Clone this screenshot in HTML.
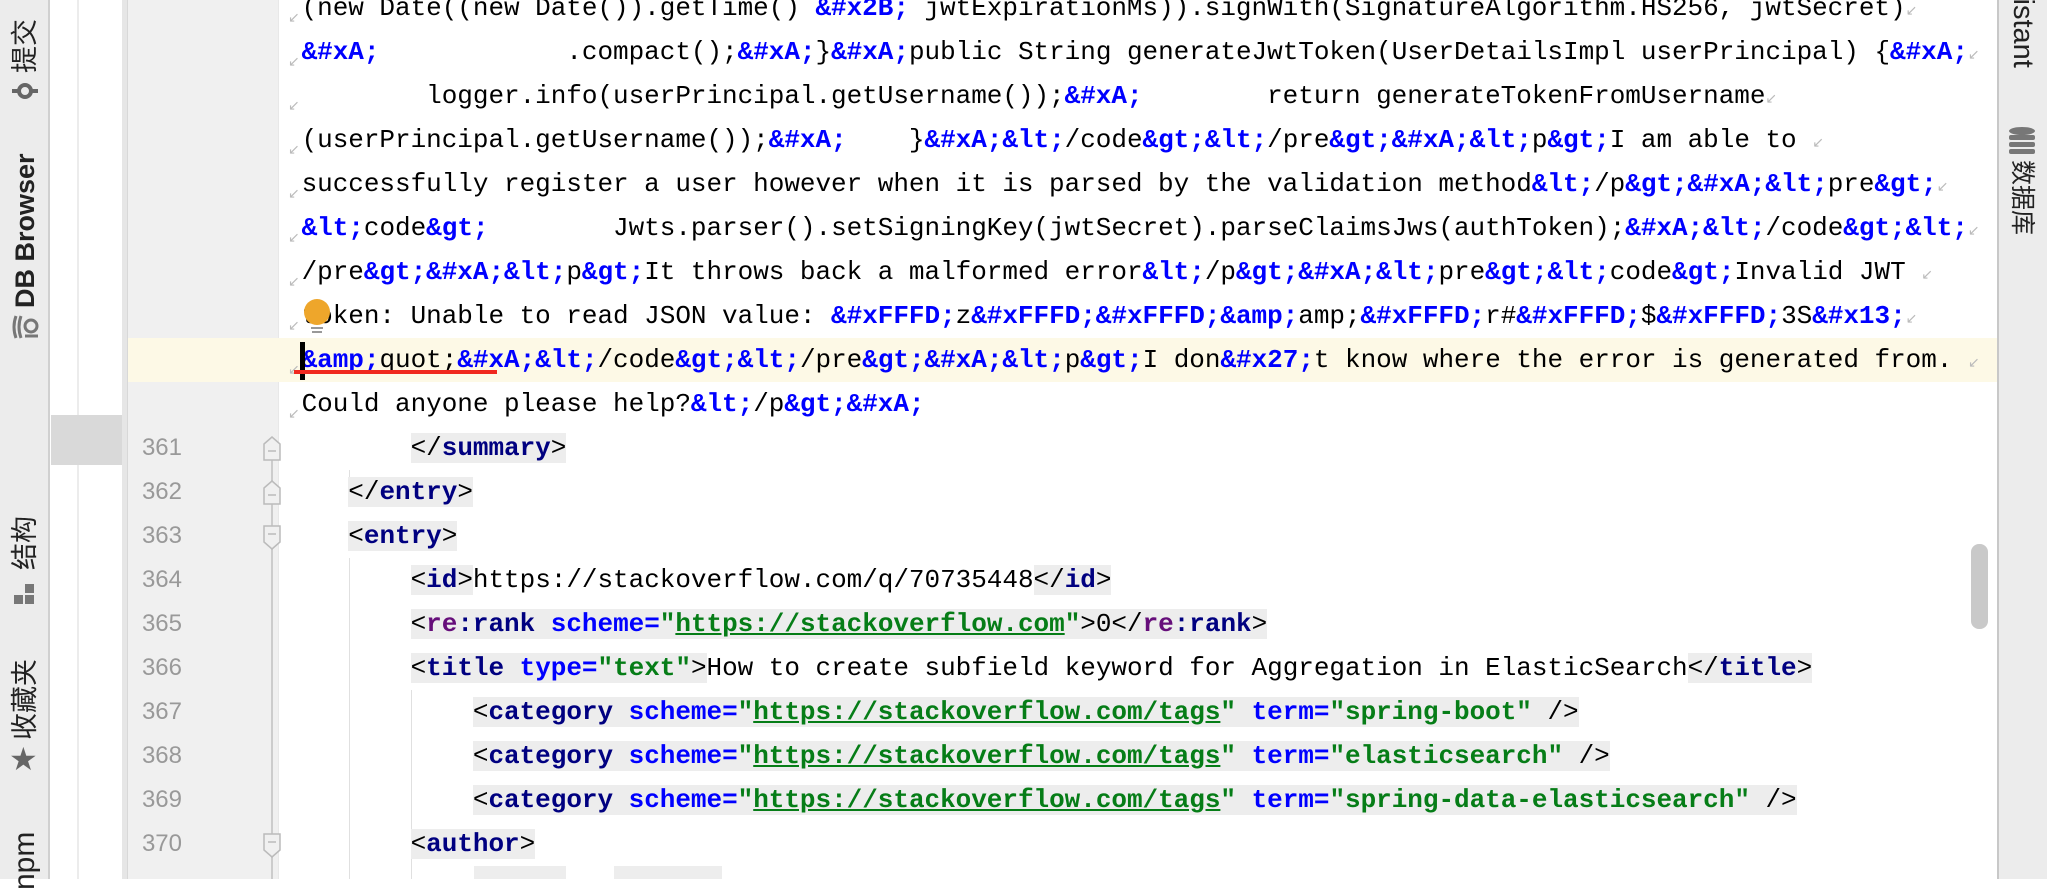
<!DOCTYPE html>
<html><head><meta charset="utf-8">
<style>
*{margin:0;padding:0;box-sizing:border-box}
body{width:2047px;height:879px;overflow:hidden;background:#fff;position:relative;font-family:"Liberation Mono",monospace}
.abs{position:absolute}
.r{position:absolute;left:286px;height:44px;line-height:44px;font-size:26px;white-space:pre;color:#000;letter-spacing:-0.03px}
.e{color:#0000ff;font-weight:bold}
.t{color:#000080;font-weight:bold}
.a{color:#0000ff;font-weight:bold}
.v{color:#067d17;font-weight:bold}
.u{text-decoration:underline}
.p{color:#660e7a;font-weight:bold}
.g{background:#ededed}
.ln{position:absolute;left:122px;width:60px;text-align:right;font-size:24px;color:#999;line-height:44px;height:44px;font-family:"Liberation Sans",sans-serif}
.wa{position:absolute;left:288px;color:#bbb;font-size:14px;font-family:"DejaVu Sans",sans-serif}
.we{color:#bbb;font-size:14px;font-weight:normal;font-family:"DejaVu Sans",sans-serif}
.vt{position:absolute;font-family:"Liberation Sans","Noto Sans CJK SC",sans-serif;font-size:27px;line-height:30px;color:#222;white-space:nowrap;transform-origin:0 0}
</style></head><body>
<!-- left toolbar -->
<div class="abs" style="left:0;top:0;width:50px;height:879px;background:#ececec;border-right:2px solid #d0d0d0"></div>
<div class="abs" style="left:51px;top:0;width:77px;height:879px;background:#fff"></div>
<div class="abs" style="left:77px;top:0;width:2px;height:879px;background:#ececec"></div>
<div class="abs" style="left:122px;top:0;width:5px;height:879px;background:#e6e6e6"></div>
<div class="abs" style="left:51px;top:415px;width:71px;height:50px;background:#d9d9d9"></div>
<div class="vt" style="left:10px;top:73px;transform:rotate(-90deg)">提交</div>
<svg class="abs" style="left:12px;top:80px" width="26" height="22"><line x1="0" y1="11" x2="26" y2="11" stroke="#666" stroke-width="4"/><circle cx="13" cy="11" r="6" fill="#ececec" stroke="#666" stroke-width="4"/></svg>
<div class="vt" style="left:10px;top:308px;transform:rotate(-90deg);font-weight:bold;font-size:27px">DB Browser</div>
<svg class="abs" style="left:10px;top:312px" width="30" height="30"><path d="M6 4 Q2 15 6 26 M11 4 Q7 15 11 26" stroke="#777" stroke-width="3" fill="none"/><circle cx="21" cy="14" r="6" fill="none" stroke="#777" stroke-width="3"/><path d="M15 24 H28" stroke="#777" stroke-width="3"/></svg>
<div class="vt" style="left:10px;top:570px;transform:rotate(-90deg)">结构</div>
<svg class="abs" style="left:14px;top:584px" width="22" height="22"><rect x="0" y="11" width="9" height="9" fill="#777"/><rect x="11" y="11" width="9" height="9" fill="#777"/><rect x="11" y="0" width="9" height="9" fill="#777"/></svg>
<div class="vt" style="left:10px;top:740px;transform:rotate(-90deg)">收藏夹</div>
<div class="abs" style="left:9px;top:740px;font-size:32px;color:#666;font-family:'DejaVu Sans'">★</div>
<div class="vt" style="left:10px;top:890px;transform:rotate(-90deg);font-size:30px">npm</div>
<!-- gutter -->
<div class="abs" style="left:128px;top:0;width:150px;height:879px;background:#f0f0f0"></div>
<div class="abs" style="left:127px;top:0;width:1px;height:879px;background:#d8d8d8"></div>
<div class="abs" style="left:271px;top:440px;width:2px;height:439px;background:#ccc"></div>
<div class="abs" style="left:278px;top:0;width:1px;height:879px;background:#e8e8e8"></div>
<!-- right bar -->
<div class="abs" style="left:1997px;top:0;width:50px;height:879px;background:#ececec;border-left:2px solid #c8c8c8"></div>
<div class="vt" style="left:2038px;top:-16px;transform:rotate(90deg);font-size:29px">sistant</div>
<svg class="abs" style="left:2008px;top:126px" width="28" height="30"><ellipse cx="14" cy="5" rx="13" ry="4" fill="#777"/><rect x="1" y="9" width="26" height="5" rx="2" fill="#777"/><rect x="1" y="16" width="26" height="5" rx="2" fill="#777"/><rect x="1" y="23" width="26" height="5" rx="2" fill="#777"/></svg>
<div class="vt" style="left:2037px;top:160px;transform:rotate(90deg);font-size:25px">数据库</div>
<!-- caret row highlight -->
<div class="abs" style="left:128px;top:338px;width:1869px;height:44px;background:#fdf9e6"></div>
<!-- indent guides -->
<div class="abs" style="left:349px;top:470px;width:1px;height:30px;background:#e0e0e0"></div>
<div class="abs" style="left:349px;top:558px;width:1px;height:321px;background:#e0e0e0"></div>
<div class="abs" style="left:411px;top:690px;width:1px;height:189px;background:#e0e0e0"></div>
<!-- scrollbar -->
<div class="abs" style="left:1971px;top:544px;width:17px;height:85px;background:#c9c9c9;border-radius:8px"></div>
<!-- wrap arrows -->
<div class="wa" style="top:10px">↙</div><div class="wa" style="top:54px">↙</div><div class="wa" style="top:98px">↙</div><div class="wa" style="top:142px">↙</div><div class="wa" style="top:186px">↙</div><div class="wa" style="top:230px">↙</div><div class="wa" style="top:274px">↙</div><div class="wa" style="top:318px">↙</div><div class="wa" style="top:362px">↙</div><div class="wa" style="top:406px">↙</div>
<!-- wrapped lines -->
<div class="r" style="top:-14px"> (new Date((new Date()).getTime() <span class="e">&amp;#x2B;</span> jwtExpirationMs)).signWith(SignatureAlgorithm.HS256, jwtSecret)<span class="we">↙</span></div>
<div class="r" style="top:30px"> <span class="e">&amp;#xA;</span>            .compact();<span class="e">&amp;#xA;</span>}<span class="e">&amp;#xA;</span>public String generateJwtToken(UserDetailsImpl userPrincipal) {<span class="e">&amp;#xA;</span><span class="we">↙</span></div>
<div class="r" style="top:74px">         logger.info(userPrincipal.getUsername());<span class="e">&amp;#xA;</span>        return generateTokenFromUsername<span class="we">↙</span></div>
<div class="r" style="top:118px"> (userPrincipal.getUsername());<span class="e">&amp;#xA;</span>    }<span class="e">&amp;#xA;&amp;lt;</span>/code<span class="e">&amp;gt;&amp;lt;</span>/pre<span class="e">&amp;gt;&amp;#xA;&amp;lt;</span>p<span class="e">&amp;gt;</span>I am able to <span class="we">↙</span></div>
<div class="r" style="top:162px"> successfully register a user however when it is parsed by the validation method<span class="e">&amp;lt;</span>/p<span class="e">&amp;gt;&amp;#xA;&amp;lt;</span>pre<span class="e">&amp;gt;</span><span class="we">↙</span></div>
<div class="r" style="top:206px"> <span class="e">&amp;lt;</span>code<span class="e">&amp;gt;</span>        Jwts.parser().setSigningKey(jwtSecret).parseClaimsJws(authToken);<span class="e">&amp;#xA;&amp;lt;</span>/code<span class="e">&amp;gt;&amp;lt;</span><span class="we">↙</span></div>
<div class="r" style="top:250px"> /pre<span class="e">&amp;gt;&amp;#xA;&amp;lt;</span>p<span class="e">&amp;gt;</span>It throws back a malformed error<span class="e">&amp;lt;</span>/p<span class="e">&amp;gt;&amp;#xA;&amp;lt;</span>pre<span class="e">&amp;gt;&amp;lt;</span>code<span class="e">&amp;gt;</span>Invalid JWT <span class="we">↙</span></div>
<div class="r" style="top:294px"> token: Unable to read JSON value: <span class="e">&amp;#xFFFD;</span>z<span class="e">&amp;#xFFFD;&amp;#xFFFD;&amp;amp;</span>amp;<span class="e">&amp;#xFFFD;</span>r#<span class="e">&amp;#xFFFD;</span>$<span class="e">&amp;#xFFFD;</span>3S<span class="e">&amp;#x13;</span><span class="we">↙</span></div>
<div class="r" style="top:338px"> <span class="e">&amp;amp;</span>quot;<span class="e">&amp;#xA;&amp;lt;</span>/code<span class="e">&amp;gt;&amp;lt;</span>/pre<span class="e">&amp;gt;&amp;#xA;&amp;lt;</span>p<span class="e">&amp;gt;</span>I don<span class="e">&amp;#x27;</span>t know where the error is generated from. <span class="we">↙</span></div>
<div class="r" style="top:382px"> Could anyone please help?<span class="e">&amp;lt;</span>/p<span class="e">&amp;gt;&amp;#xA;</span></div>
<!-- caret, underline, bulb -->
<div class="abs" style="left:300px;top:342px;width:5px;height:38px;background:#000"></div>
<div class="abs" style="left:294px;top:370px;width:203px;height:4px;background:#f0281e"></div>
<div class="abs" style="left:304px;top:299px;width:26px;height:26px;border-radius:50%;background:#eea62b"></div>
<div class="abs" style="left:311px;top:327px;width:12px;height:2px;background:#999"></div>
<div class="abs" style="left:312px;top:331px;width:10px;height:2px;background:#999"></div>
<!-- line numbers -->
<div class="ln" style="top:426px">361</div><div class="ln" style="top:470px">362</div><div class="ln" style="top:514px">363</div><div class="ln" style="top:558px">364</div><div class="ln" style="top:602px">365</div><div class="ln" style="top:646px">366</div><div class="ln" style="top:690px">367</div><div class="ln" style="top:734px">368</div><div class="ln" style="top:778px">369</div><div class="ln" style="top:822px">370</div>
<!-- fold markers -->
<svg class="abs" style="left:262px;top:436px" width="20" height="26"><path d="M2 8 L10 1 L18 8 V24 H2 Z" fill="#f0f0f0" stroke="#bbb" stroke-width="1.5"/><path d="M6 15 H14" stroke="#bbb" stroke-width="1.5"/></svg>
<svg class="abs" style="left:262px;top:480px" width="20" height="26"><path d="M2 8 L10 1 L18 8 V24 H2 Z" fill="#f0f0f0" stroke="#bbb" stroke-width="1.5"/><path d="M6 15 H14" stroke="#bbb" stroke-width="1.5"/></svg>
<svg class="abs" style="left:262px;top:524px" width="20" height="26"><path d="M2 2 H18 V18 L10 25 L2 18 Z" fill="#f0f0f0" stroke="#bbb" stroke-width="1.5"/><path d="M6 10 H14" stroke="#bbb" stroke-width="1.5"/></svg>
<svg class="abs" style="left:262px;top:832px" width="20" height="26"><path d="M2 2 H18 V18 L10 25 L2 18 Z" fill="#f0f0f0" stroke="#bbb" stroke-width="1.5"/><path d="M6 10 H14" stroke="#bbb" stroke-width="1.5"/></svg>
<!-- code lines -->
<div class="r" style="top:426px">        <span class="g">&lt;/<span class="t">summary</span>&gt;</span></div>
<div class="r" style="top:470px">    <span class="g">&lt;/<span class="t">entry</span>&gt;</span></div>
<div class="r" style="top:514px">    <span class="g">&lt;<span class="t">entry</span>&gt;</span></div>
<div class="r" style="top:558px">        <span class="g">&lt;<span class="t">id</span>&gt;</span>https://stackoverflow.com/q/70735448<span class="g">&lt;/<span class="t">id</span>&gt;</span></div>
<div class="r" style="top:602px">        <span class="g">&lt;<span class="p">re</span><span class="t">:rank</span> <span class="a">scheme</span><span class="a">=</span><span class="v">"<span class="u">https://stackoverflow.com</span>"</span>&gt;0&lt;/<span class="p">re</span><span class="t">:rank</span>&gt;</span></div>
<div class="r" style="top:646px">        <span class="g">&lt;<span class="t">title</span> <span class="a">type</span><span class="a">=</span><span class="v">"text"</span>&gt;</span>How to create subfield keyword for Aggregation in ElasticSearch<span class="g">&lt;/<span class="t">title</span>&gt;</span></div>
<div class="r" style="top:690px">            <span class="g">&lt;<span class="t">category</span> <span class="a">scheme</span><span class="a">=</span><span class="v">"<span class="u">https://stackoverflow.com/tags</span>"</span> <span class="a">term</span><span class="a">=</span><span class="v">"spring-boot"</span> /&gt;</span></div>
<div class="r" style="top:734px">            <span class="g">&lt;<span class="t">category</span> <span class="a">scheme</span><span class="a">=</span><span class="v">"<span class="u">https://stackoverflow.com/tags</span>"</span> <span class="a">term</span><span class="a">=</span><span class="v">"elasticsearch"</span> /&gt;</span></div>
<div class="r" style="top:778px">            <span class="g">&lt;<span class="t">category</span> <span class="a">scheme</span><span class="a">=</span><span class="v">"<span class="u">https://stackoverflow.com/tags</span>"</span> <span class="a">term</span><span class="a">=</span><span class="v">"spring-data-elasticsearch"</span> /&gt;</span></div>
<div class="r" style="top:822px">        <span class="g">&lt;<span class="t">author</span>&gt;</span></div>
<div class="abs" style="left:474px;top:866px;width:92px;height:13px;background:#ededed"></div>
<div class="abs" style="left:614px;top:866px;width:108px;height:13px;background:#ededed"></div>
</body></html>
